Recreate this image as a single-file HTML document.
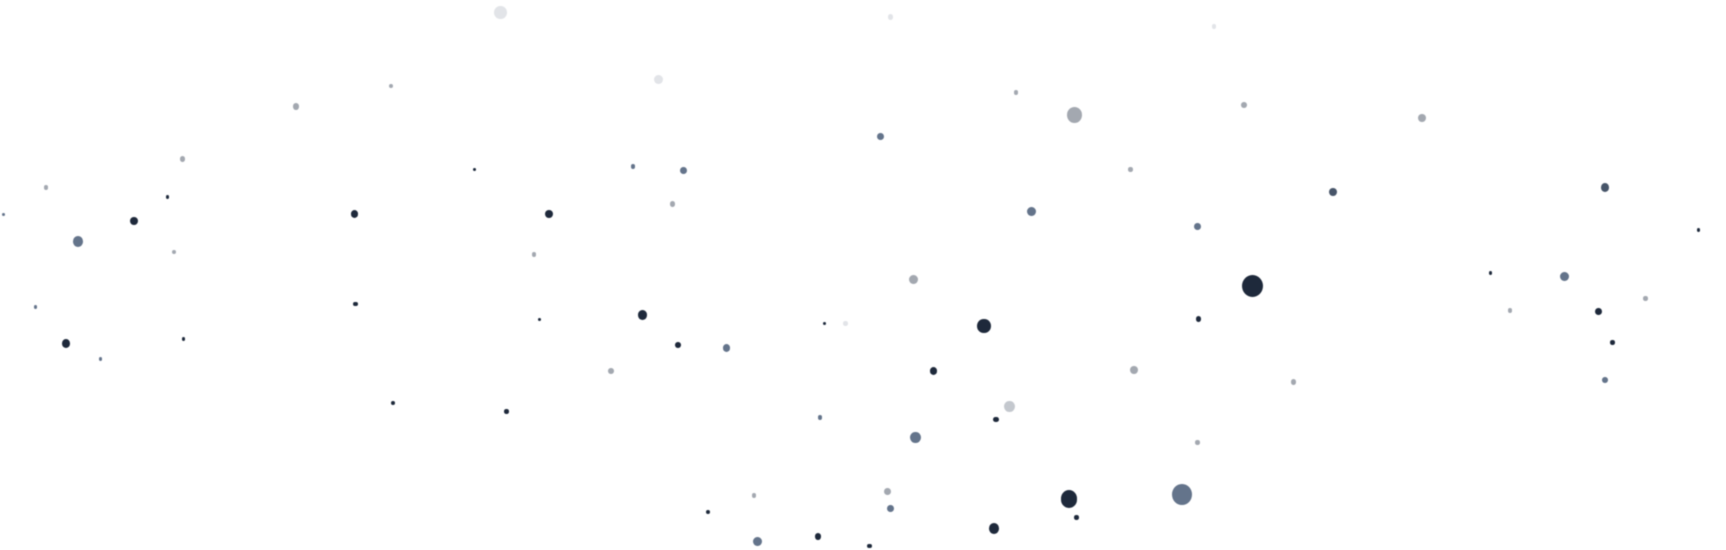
<!DOCTYPE html>
<html><head><meta charset="utf-8"><style>
html,body{margin:0;padding:0;background:#fff;width:1726px;height:550px;overflow:hidden;position:relative}
.d{position:absolute;border-radius:50%;filter:blur(0.4px)}
</style></head><body>
<div id="c"></div>
<script>
var D="#1e293b",G="#64748b",L="#a3a8b0",V="#e2e4e8";
var p=[[60,312,4,D],[122,201,3.5,D],[152,179,1.5,D],[71,219,4.5,G],[166,144,2.5,L],[269,97,3,L],[322,194,3.5,D],[323,276,2,D],[357,366,2,D],[460,374,2,D],[499,194,3.5,D],[584,286,4,D],[616,313,2.5,D],[660,316,3.5,G],[621,155,3,G],[800,124,3,G],[894,296,6,D],[848,337,3.5,D],[937,192,4,G],[976,104,7,L],[1138,259,9.5,D],[1089,290,2.5,D],[1211,174,3.5,"#475569"],[1292,107,3.5,L],[1458,170,4,"#475569"],[1421,251,4,G],[1452,283,3,D],[1465,311,2,D],[1458,345,2.5,G],[1030,336,3.5,L],[917,369,5,"#c4c8ce"],[905,381,2.5,D],[832,397,5,G],[971,453,7.5,D],[1074,449,9,G],[903,480,4.5,D],[743,487,3,D],[688,492,4,G],[643,465,2,D],[809,462,3,G],[806,446,3,L],[790,496,2,D],[455,11,6,V],[598,72,4,V],[830,254,4,L],[555,337,2.5,L],[1088,206,3,G],[1175,347,2.5,L],[42,170,2,L],[3,195,1.5,G],[167,308,1.5,D],[158,229,2,L],[355,78,2,L],[1130,95,2.5,L],[1543,209,1.5,D],[1354,248,1.5,D],[978,470,2,D],[485,231,2,L],[611,185,2.5,L],[575,151,2,G],[431,154,1.5,D],[490,290,1.5,D],[745,379,2,G],[1027,154,2,L],[923,84,2,L],[809,15,2.5,V],[1103,24,2,V],[1495,271,2,L],[1372,282,2,L],[1088,402,2,L],[685,450,2,L],[91,326,1.5,G],[32,279,1.5,G],[768,294,2,V],[749,294,1.5,D]];
var s=1726/1568,h="";
p.forEach(function(a){var r=a[2]*s;h+='<div class="d" style="left:'+(a[0]*s-r)+'px;top:'+(a[1]*s-r)+'px;width:'+2*r+'px;height:'+2*r*1.05+'px;background:'+a[3]+'"></div>';});
document.getElementById("c").innerHTML=h;
</script>
</body></html>
